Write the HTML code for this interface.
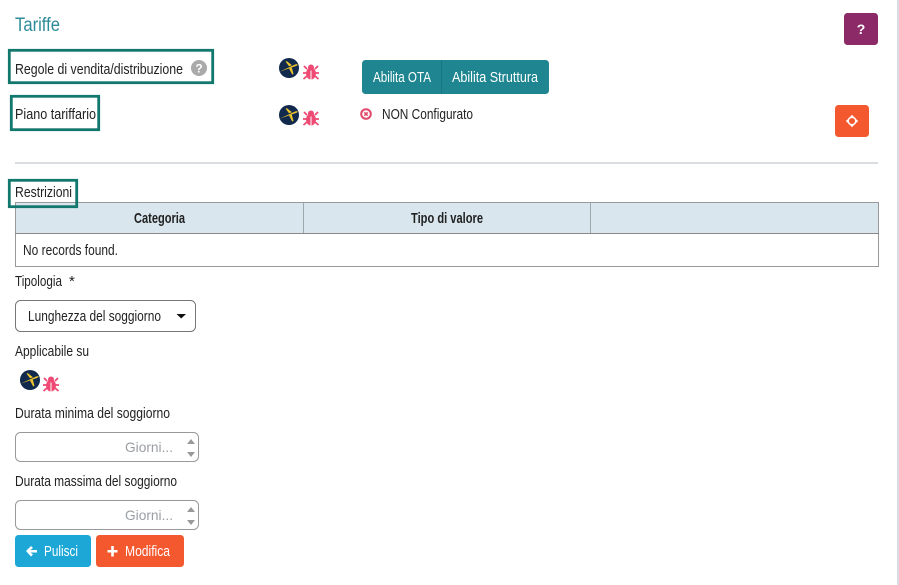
<!DOCTYPE html>
<html lang="it">
<head>
<meta charset="utf-8">
<title>Tariffe</title>
<style>
html,body{margin:0;padding:0;background:#fff;width:899px;height:585px;overflow:hidden}
svg{display:block}
text{font-family:"Liberation Sans",sans-serif;font-size:15px;fill:#222}
</style>
</head>
<body>
<svg width="899" height="585" viewBox="0 0 899 585" xmlns="http://www.w3.org/2000/svg">
<defs>
<g id="exp">
  <circle cx="0" cy="0" r="10" fill="#10294d"/>
  <path d="M-9.500 3.800 L7 -2 Q9 -3 8.500 -3.800 Q7.500 -4 5.500 -3.200 Z" fill="#eec42c"/>
  <path d="M-3.500 -6.500 L-2 -6.800 L3 -2.800 L0 -1.800 Z M0 0.500 L2.800 -0.500 L4.500 6 L3.200 6.500 Z" fill="#eec42c"/>
</g>
<g id="bug" fill="#ee4a74">
  <ellipse cx="0" cy="1.500" rx="5" ry="6"/>
  <circle cx="0" cy="-4.500" r="3"/>
  <path d="M-4 -3 L-7 -6 M4 -3 L7 -6 M-4 1 L-8 1 M4 1 L8 1 M-4 4 L-7.500 7 M4 4 L7.500 7" stroke="#ee4a74" stroke-width="1.800" fill="none"/>
  <path d="M0 -1.500 V7.500" stroke="#fff" stroke-width="1"/>
</g>
</defs>

<rect x="897" y="0" width="2" height="585" fill="#d8dce3"/>

<text x="15" y="31" style="font-size:19px;fill:#2e8b99" textLength="45" lengthAdjust="spacingAndGlyphs">Tariffe</text>

<rect x="9.300" y="50.300" width="203.400" height="32.400" fill="none" stroke="#12776d" stroke-width="2.800"/>
<text x="15" y="74" textLength="168" lengthAdjust="spacingAndGlyphs">Regole di vendita/distribuzione</text>
<circle cx="199" cy="68" r="8" fill="#aaa"/>
<text x="199" y="72.500" text-anchor="middle" style="font-size:12px;font-weight:bold;fill:#fff">?</text>

<rect x="11.300" y="96.300" width="87.400" height="33.400" fill="none" stroke="#12776d" stroke-width="2.800"/>
<text x="15" y="119" textLength="81" lengthAdjust="spacingAndGlyphs">Piano tariffario</text>

<use href="#exp" x="289" y="68"/>
<use href="#bug" x="311" y="72"/>
<use href="#exp" x="289" y="115"/>
<use href="#bug" x="311" y="118"/>

<rect x="362" y="60" width="187" height="34" rx="3.500" fill="#1f8691"/>
<rect x="441" y="60" width="1" height="34" fill="#177480"/>
<text x="373" y="82" style="fill:#fff" textLength="58" lengthAdjust="spacingAndGlyphs">Abilita OTA</text>
<text x="452" y="82" style="fill:#fff" textLength="86" lengthAdjust="spacingAndGlyphs">Abilita Struttura</text>

<circle cx="366" cy="114" r="4.800" fill="#fff" stroke="#e2486a" stroke-width="2"/>
<path d="M364.300 112.300 L367.700 115.700 M367.700 112.300 L364.300 115.700" stroke="#e2486a" stroke-width="1.500"/>
<text x="382" y="119" textLength="91" lengthAdjust="spacingAndGlyphs">NON Configurato</text>

<rect x="844" y="13" width="34" height="32" rx="3.500" fill="#8c2a67"/>
<text x="861" y="34" text-anchor="middle" style="font-size:14px;font-weight:bold;fill:#fff">?</text>

<rect x="835" y="105" width="34" height="32" rx="3.500" fill="#f4582f"/>
<circle cx="852" cy="121" r="3.800" fill="none" stroke="#fff" stroke-width="1.500"/>
<path d="M852 114.800 L854 117 H850 Z M852 127.200 L854 125 H850 Z M845.800 121 L848 119 V123 Z M858.200 121 L856 119 V123 Z" fill="#fff"/>

<rect x="15" y="162" width="863" height="2" fill="#d9dce1"/>

<rect x="15.500" y="202.500" width="863" height="64" fill="#fff" stroke="#999" stroke-width="1"/>
<rect x="16" y="203" width="862" height="30" fill="#d9e6ed"/>
<rect x="15" y="233" width="864" height="1" fill="#888"/>
<rect x="303" y="203" width="1" height="30" fill="#9aa"/>
<rect x="590" y="203" width="1" height="30" fill="#9aa"/>
<text x="134" y="223" style="font-weight:bold" textLength="51" lengthAdjust="spacingAndGlyphs">Categoria</text>
<text x="411" y="223" style="font-weight:bold" textLength="72" lengthAdjust="spacingAndGlyphs">Tipo di valore</text>
<text x="23" y="255" textLength="95" lengthAdjust="spacingAndGlyphs">No records found.</text>

<rect x="9.300" y="180.300" width="67.400" height="26.400" fill="none" stroke="#12776d" stroke-width="2.800"/>
<text x="15" y="197" textLength="57" lengthAdjust="spacingAndGlyphs">Restrizioni</text>

<text x="15" y="286" textLength="47" lengthAdjust="spacingAndGlyphs">Tipologia</text>
<text x="69" y="286">*</text>

<rect x="15.500" y="300.500" width="180" height="31" rx="5" fill="#fff" stroke="#777"/>
<text x="28" y="321" textLength="133" lengthAdjust="spacingAndGlyphs">Lunghezza del soggiorno</text>
<path d="M176.500 314 H186 L181.200 318.500 Z" fill="#111"/>

<text x="15" y="356" textLength="74" lengthAdjust="spacingAndGlyphs">Applicabile su</text>
<use href="#exp" x="30" y="380"/>
<use href="#bug" x="51" y="384"/>

<text x="15" y="418" textLength="155" lengthAdjust="spacingAndGlyphs">Durata minima del soggiorno</text>
<rect x="15.500" y="432.500" width="183" height="29" rx="5" fill="#fff" stroke="#999"/>
<text x="125" y="452" style="font-size:14px;fill:#9a9ea3" textLength="48" lengthAdjust="spacingAndGlyphs">Giorni...</text>
<path d="M187 444 L191 439 L195 444 Z M187 452 H195 L191 457 Z" fill="#999"/>

<text x="15" y="486" textLength="162" lengthAdjust="spacingAndGlyphs">Durata massima del soggiorno</text>
<rect x="15.500" y="500.500" width="183" height="29" rx="5" fill="#fff" stroke="#999"/>
<text x="125" y="520" style="font-size:14px;fill:#9a9ea3" textLength="48" lengthAdjust="spacingAndGlyphs">Giorni...</text>
<path d="M187 512 L191 507 L195 512 Z M187 520 H195 L191 525 Z" fill="#999"/>

<rect x="15" y="535" width="76" height="32" rx="3.500" fill="#1ca7d6"/>
<path d="M26 551 L31 546 L33 548 L30.500 550 H37 V552.500 H30.500 L33 554.500 L31 556.500 Z" fill="#fff"/>
<text x="44" y="556" style="fill:#fff" textLength="34" lengthAdjust="spacingAndGlyphs">Pulisci</text>

<rect x="96" y="535" width="88" height="32" rx="3.500" fill="#f4582f"/>
<path d="M107.500 550 H111.200 V546 H113.800 V550 H117.500 V552.500 H113.800 V556.500 H111.200 V552.500 H107.500 Z" fill="#fff"/>
<text x="125" y="556" style="fill:#fff" textLength="45" lengthAdjust="spacingAndGlyphs">Modifica</text>
</svg>
</body>
</html>
